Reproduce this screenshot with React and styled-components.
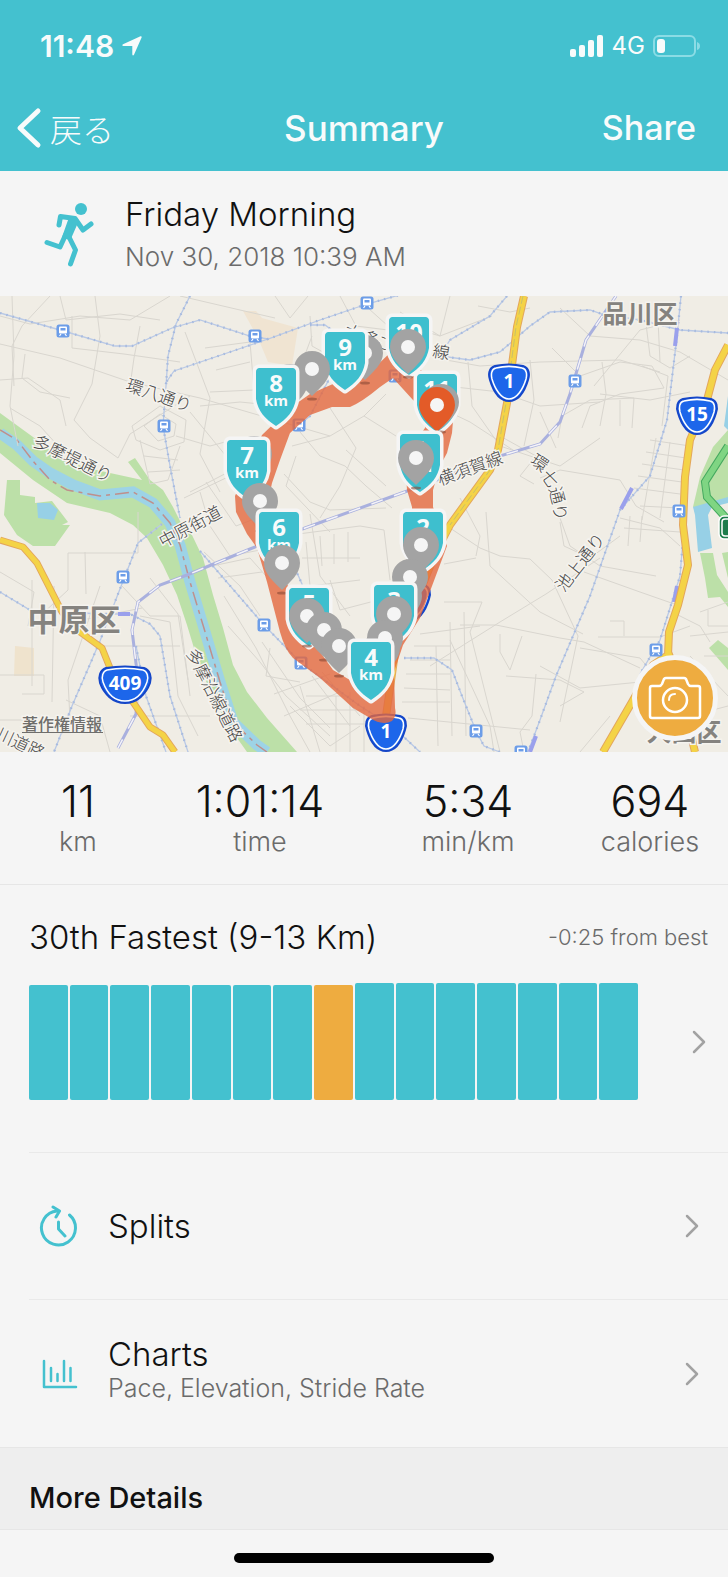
import React from 'react'
import styled, { createGlobalStyle } from 'styled-components';

const teal = '#44c1cf';
const amber = '#eeac40';

const GlobalStyle = createGlobalStyle`
  * {
    box-sizing: border-box;
  }
  body {
    margin: 0;
    background: #f5f5f5;
    color: #111;
    font-family: Inter, "Noto Sans CJK JP", sans-serif;
  }
  h1, h2, h3, p, dl, dd, dt {
    margin: 0;
    font-weight: 300;
  }
`;

const Header = styled.header`
  background: ${teal};
  color: #f8fbfb;
`;

const StatusBar = styled.div`
  display: flex;
  justify-content: space-between;
  align-items: center;
  height: 88px;
  padding: 3px 28px 0 40px;
`;

const StatusGroup = styled.div`
  display: flex;
  align-items: center;
  gap: 8px;
`;

const Clock = styled.span`
  font-size: 30px;
  font-weight: 600;
`;

const Network = styled.span`
  font-size: 24px;
`;

const Nav = styled.nav`
  display: grid;
  grid-template-columns: 1fr auto 1fr;
  align-items: center;
  height: 83px;
  padding: 0 16px 4px;
`;

const NavButton = styled.button`
  display: flex;
  align-items: center;
  gap: 8px;
  justify-self: ${props => props.$end ? 'end' : 'start'};
  padding: ${props => props.$end ? '0 16px' : '0'};
  border: none;
  background: none;
  color: inherit;
  font-family: inherit;
  font-size: ${props => props.$end ? '34px' : '32px'};
  font-weight: ${props => props.$end ? 500 : 300};
  cursor: pointer;
`;

const NavTitle = styled.h1`
  font-size: 35px;
  font-weight: 500;
`;

const Activity = styled.section`
  display: flex;
  align-items: center;
  gap: 30px;
  height: 125px;
  padding: 0 43px;
`;

const ActivityTitle = styled.h2`
  font-size: 33px;
  line-height: 46px;
`;

const SubText = styled.p`
  color: #6b6b6b;
  font-size: ${props => props.$small ? '25px' : '26px'};
  line-height: ${props => props.$small ? '28px' : '40px'};
`;

const MapPanel = styled.section`
  position: relative;
  overflow: hidden;
`;

const MapSvg = styled.svg`
  display: block;
  width: 100%;
  background: #f0ede5;
`;

const CameraButton = styled.button`
  position: absolute;
  right: 10px;
  bottom: 11px;
  display: flex;
  align-items: center;
  justify-content: center;
  width: 86px;
  height: 86px;
  padding: 0;
  border: 5px solid #f5f5f5;
  border-radius: 50%;
  background: ${amber};
  cursor: pointer;
`;

const Stats = styled.dl`
  display: grid;
  grid-template-columns: 3fr 4fr 4fr 3fr;
  align-items: center;
  height: 133px;
  padding-top: 2px;
  border-bottom: 1px solid #e6e6e6;
`;

const Stat = styled.div`
  display: flex;
  flex-direction: column-reverse;
  align-items: center;
`;

const StatValue = styled.dd`
  font-size: 43px;
  line-height: 46px;
`;

const StatLabel = styled.dt`
  color: #6b6b6b;
  font-size: 27px;
  line-height: 36px;
`;

const Ranking = styled.section`
  margin-left: 29px;
  padding: 30px 0 52px;
  border-bottom: 1px solid #e9e9e9;
`;

const RankingHead = styled.div`
  display: flex;
  align-items: center;
  justify-content: space-between;
  height: 44px;
  padding-right: 20px;
`;

const RankingTitle = styled.h3`
  font-size: 33px;
`;

const FromBest = styled.span`
  color: #6b6b6b;
  font-size: 22px;
  font-weight: 300;
`;

const RankingLink = styled.a`
  display: flex;
  align-items: center;
  justify-content: space-between;
  margin-top: 24px;
  padding-right: 22px;
`;

const Bars = styled.div`
  display: flex;
  align-items: flex-end;
  gap: 2px;
  flex: 1;
  height: 117px;
  margin-right: 54px;
`;

const Bar = styled.div`
  flex: 1;
  height: ${props => props.$tall ? '117px' : '115px'};
  border-radius: 2px;
  background: ${props => props.$current ? amber : teal};
`;

const Row = styled.a`
  display: flex;
  align-items: center;
  height: 147px;
  margin-left: 29px;
  padding: 0 29px 0 9px;
  border-bottom: ${props => props.$last ? 'none' : '1px solid #e9e9e9'};
  color: inherit;
  text-decoration: none;
`;

const RowIcon = styled.span`
  display: flex;
  width: 70px;
`;

const RowText = styled.div`
  flex: 1;
  padding-bottom: ${props => props.$raised ? '12px' : '0'};
`;

const RowTitle = styled.h3`
  font-size: 33px;
  line-height: 40px;
`;

const MoreDetails = styled.h3`
  padding: 33px 29px 14px;
  border-top: 1px solid #e6e6e6;
  border-bottom: 1px solid #e6e6e6;
  background: #eee;
  font-size: 29px;
  font-weight: 500;
  line-height: 34px;
`;

const Footer = styled.footer`
  display: flex;
  justify-content: center;
  padding: 23px 0 16px;
`;

const HomeBar = styled.div`
  width: 260px;
  height: 10px;
  border-radius: 5px;
  background: #000;
`;

const MapLabel = styled.text`
  fill: ${props => props.$area ? '#85837f' : '#444'};
  stroke: #f5f3ee;
  stroke-width: 3px;
  paint-order: stroke;
  font-family: "Noto Sans CJK JP", sans-serif;
  font-size: ${props => props.$size || 17}px;
  font-weight: ${props => props.$area ? 700 : 300};
  text-anchor: middle;
`;

const LegalLabel = styled(MapLabel)`
  fill: #6f6e6b;
  font-weight: 500;
`;

const PinText = styled.text`
  fill: #f8fbfb;
  font-family: "Open Sans", "Noto Sans", sans-serif;
  font-size: ${props => props.$unit ? '15px' : '24px'};
  font-weight: 700;
  text-anchor: middle;
`;

const ShieldText = styled.text`
  fill: #fff;
  font-family: "Noto Sans", sans-serif;
  font-size: 19px;
  font-weight: 700;
  text-anchor: middle;
`;

const streets = [
  'M0 48L60 62L130 86L200 102L330 140', 'M12 0L14 60L10 110L18 150', 'M50 0L22 30L12 50L14 90', 'M0 20L30 28L80 20L130 24L170 0',
  'M60 0L66 24L120 18L160 24', 'M72 20V52L124 58L180 66', 'M95 0L100 40L92 88L74 124L90 142L118 162L130 138L190 100',
  'M140 30L134 62L130 90', 'M25 58L22 82L40 96L70 102', 'M0 84L28 82L60 104L66 130', 'M10 112L40 130L60 152',
  'M185 36L210 102L200 158L220 196', 'M180 0L240 14L275 22', 'M205 52L250 46L254 94L210 96', 'M216 74L250 66',
  'M200 110L240 106L280 110', 'M190 116L226 160L268 208', 'M176 140L210 150L240 142', 'M132 130L160 110L186 124L184 146L160 154L136 144Z',
  'M144 130L160 118L176 128L174 140L158 145Z', 'M140 144L150 188L168 184L180 150', 'M144 160L178 164', 'M148 176L180 174', 'M184 202L230 180L262 170',
  'M200 196L210 230L230 260L280 250', 'M190 196L240 170L248 200', 'M228 176L260 240', 'M206 186L236 230L262 220',
  'M275 0L290 22L308 0', 'M310 20L312 50L330 60', 'M312 40L300 72', 'M340 0L356 30L388 34', 'M368 12L388 30',
  'M300 136L320 160L345 170L366 190L392 212', 'M292 150L330 140L364 120L386 98', 'M330 112L356 152L340 190L320 222',
  'M284 178L310 206L330 214L386 212', 'M296 160L286 190L330 236', 'M346 154L386 190', 'M364 120L396 140', 'M310 218L320 280L350 320',
  'M298 238L360 230L384 234L390 284', 'M306 246L310 290L360 284', 'M320 240L322 270M334 238V268M348 236V266', 'M302 262H360', 'M330 284L340 314L386 302',
  'M0 276L34 296L28 330', 'M68 257H138V216', 'M85 256L86 298', 'M68 257V294L40 320', 'M32 284V390M54 290L52 406', 'M0 379H44V398H22', 'M0 424H70L68 384L100 290',
  'M122 290L150 320H180L190 400', 'M140 320L170 326L178 400L198 440', 'M150 282L178 318L188 384', 'M100 350H180', 'M130 420H210', 'M82 324L142 312',
  'M66 404L100 420L110 456', 'M204 256L240 290L260 320', 'M212 270L250 262L266 280', 'M218 282L262 276', 'M224 300L256 352L290 420L310 456',
  'M228 330L260 366L286 400L330 440', 'M262 346L300 402L330 432', 'M270 352L266 380L300 386', 'M274 398L330 378', 'M284 420L340 396', 'M300 390L320 456',
  'M312 380L350 430M322 376L360 420', 'M290 410L330 450L360 430', 'M306 400L350 400M300 414H366M306 428H370', 'M336 400V456M350 396V456M364 410V456',
  'M450 0L440 40L420 34', 'M400 16L440 40L492 20', 'M478 10L510 16L530 12', 'M446 64L480 70L540 66L620 64L660 76', 'M446 90L500 96L540 110L600 106',
  'M468 66L472 110L500 150L560 170L600 142', 'M424 104L470 126L516 156', 'M456 76V104', 'M530 64L534 104L524 150', 'M560 12L590 40L640 44L680 56L728 84',
  'M552 52L580 80L620 66L652 70L664 92L620 98L590 110L582 132', 'M602 66L606 98L600 130', 'M600 98L650 104L690 96', 'M646 28L650 60L670 72L690 60', 'M658 24L660 66',
  'M594 90L640 34L680 24', 'M558 142L562 120L590 104L634 102L632 132', 'M642 70L668 80L662 130', 'M540 116L556 152', 'M620 104V130',
  'M650 144L690 150', 'M646 156L686 162', 'M642 168L684 174', 'M638 180L682 186', 'M634 192L680 198', 'M656 142L642 224M670 146L660 222', 'M640 210L680 212',
  'M500 140L536 160L520 180L534 188', 'M540 182L560 174L620 184L636 210L664 226', 'M560 222L570 250L600 270L656 280', 'M560 226L564 250L590 262L620 240',
  'M450 232L480 252L500 260L530 263L552 284L578 340L560 426', 'M460 202L480 240L476 260', 'M444 268L476 262', 'M486 216L490 270L540 316L583 338',
  'M430 370L500 326L546 298L600 262', 'M460 329H496L560 342L584 346L640 372', 'M444 306H482L470 336L500 456', 'M420 338L480 330', 'M500 338V356L510 374L522 340',
  'M450 326L452 440M464 316L466 440M436 350L438 450', 'M414 350H450M410 364H450M406 378H450', 'M404 392L450 394M402 406H450M408 422L530 434', 'M450 344L490 430L494 456',
  'M536 378L532 420L520 436L524 456', 'M506 380L560 384L584 396L560 410', 'M540 370L580 392L640 386', 'M580 352L640 362L660 386', 'M598 341H660L690 330', 'M610 325H624V340',
  'M584 276L640 296L680 310', 'M620 222L660 232L680 250', 'M624 232L680 236', 'M630 220L628 250M642 220L640 246', 'M700 316L728 306M708 314V330H728M690 340L728 336', 'M676 318L700 330L710 346',
  'M690 360L728 400M700 380L690 420L728 410M704 360L728 360', 'M640 410L660 440L690 436', 'M610 420L580 456',
];

const railways = [
  'M0 17L60 34L115 50H132L172 32L200 24L250 40L268 43L320 24L367 8L410 -4',
  'M190 0L176 28L168 60L166 90L163 130L170 170L180 222', 'M268 43L230 56L174 75L165 88',
  'M310 29H325L340 40', 'M507 0L490 20L450 44L440 60L470 64L500 56L530 30L550 16L590 14L602 18L640 24L680 34L728 37',
  'M681 0L677 40L667 124L650 180L620 214L590 300L556 380L540 424L528 456',
  'M340 62L310 120L299 129', 'M200 255L264 329L301 367L360 410L392 430L420 456', 'M162 228L138 247L118 298L100 345L72 410L54 456',
  'M0 296L30 314L100 318H130L150 328L160 340L170 400L188 456', 'M136 350L146 400L166 456',
  'M404 362H434L452 374L462 400L476 435L484 450L500 456', 'M685 219L680 280L660 344L640 378', 'M284 248L302 288L304 310',
];

const jrLines = [
  'M616 0L586 44L570 98L560 126L540 148L500 160L410 194L305 232L250 253L187 279L160 289L138 306L132 334L138 384L136 418L118 452',
];

const stations = [[63, 35], [255, 40], [367, 7], [164, 130], [299, 129], [395, 80], [575, 85], [679, 215], [123, 281], [264, 329], [301, 367], [476, 435], [656, 354], [521, 456]];

// kept in drawing order: lower markers overlap the ones above
const markers = [
  { x: 365, y: 57 },
  { x: 409, y: 21, km: 10 },
  { x: 408, y: 51 },
  { x: 345, y: 36, km: 9 },
  { x: 290, y: 86 },
  { x: 312, y: 73 },
  { x: 276, y: 72, km: 8 },
  { x: 437, y: 78, km: 11 },
  { x: 441, y: 106 },
  { x: 437, y: 109, end: true },
  { x: 420, y: 138, km: 1 },
  { x: 416, y: 162 },
  { x: 254, y: 158 },
  { x: 247, y: 144, km: 7 },
  { x: 260, y: 205 },
  { x: 423, y: 216, km: 2 },
  { x: 279, y: 216, km: 6 },
  { x: 421, y: 249 },
  { x: 282, y: 267 },
  { x: 404, y: 300 },
  { x: 410, y: 281 },
  { x: 394, y: 289, km: 3 },
  { x: 309, y: 292, km: 5 },
  { x: 394, y: 318 },
  { x: 307, y: 320 },
  { x: 324, y: 334 },
  { x: 382, y: 352 },
  { x: 385, y: 342 },
  { x: 339, y: 350 },
  { x: 371, y: 346, km: 4 },
];

const stats = [
  { value: '11', label: 'km' },
  { value: '1:01:14', label: 'time' },
  { value: '5:34', label: 'min/km' },
  { value: '694', label: 'calories' },
];

const Station = ({ x, y }) => (
  <g transform={`translate(${x} ${y})`}>
    <rect x="-6.5" y="-6.5" width="13" height="13" rx="2.5" fill="#6c9de8" />
    <path d="M-3 -4.5H3A1 1 0 0 1 4 -3.5V1.5A1 1 0 0 1 3 2.5H-3A1 1 0 0 1 -4 1.5V-3.5A1 1 0 0 1 -3 -4.5Z" fill="#fff" />
    <path d="M-2.5 -3H2.5V-.5H-2.5Z" fill="#6c9de8" />
    <path d="M-2 3L-3.5 5M2 3L3.5 5" stroke="#fff" strokeWidth="1.2" />
  </g>
);

const Shield = ({ x, y, number, wide }) => (
  <g transform={`translate(${x} ${y})`}>
    {wide
      ? <path d="M-19 -17C-7 -19 7 -19 19 -17C25 -15 27 -8 25 -2C21 9 12 18 0 18C-12 18 -21 9 -25 -2C-27 -8 -25 -15 -19 -17Z" fill="#1d66ea" stroke="#1546c8" strokeWidth="2" />
      : <path d="M-14 -17C-5 -19 5 -19 14 -17C20 -15 21 -9 19 -3C16 7 10 18 0 18C-10 18 -16 7 -19 -3C-21 -9 -20 -15 -14 -17Z" fill="#1d66ea" stroke="#1546c8" strokeWidth="2" />}
    {wide
      ? <path d="M-18 -15C-7 -17 7 -17 18 -15C22 -14 24 -8 22 -3C18 8 11 16 0 16C-11 16 -18 8 -22 -3C-24 -8 -22 -14 -18 -15Z" fill="none" stroke="#fff" strokeWidth="1.5" />
      : <path d="M-13 -15C-5 -17 5 -17 13 -15C18 -14 18 -8 17 -4C14 6 8 16 0 16C-8 16 -14 6 -17 -4C-18 -8 -18 -14 -13 -15Z" fill="none" stroke="#fff" strokeWidth="1.5" />}
    <ShieldText y="5">{number}</ShieldText>
  </g>
);

const KmPin = ({ x, y, km }) => (
  <g transform={`translate(${x} ${y})`}>
    <path d="M-17 0H17A4 4 0 0 1 20 4V31C18 43 11 51 0 58C-11 51 -18 43 -20 31V4A4 4 0 0 1 -17 0Z" fill="#3ebfce" stroke="#f5f5f5" strokeWidth="7" paintOrder="stroke" strokeLinejoin="round" />
    <PinText y="24">{km}</PinText>
    <PinText y="38" $unit>km</PinText>
  </g>
);

const DotPin = ({ x, y, end }) => (
  <g transform={`translate(${x} ${y})`}>
    <ellipse cy="30" rx="5" ry="1.5" fill="#8a4a35" opacity=".6" />
    <path d="M-18 0A18 18 0 0 1 18 0C18 11 8 19 0 27C-8 19 -18 11 -18 0Z" fill={end ? '#e35b28' : '#a3a3a3'} />
    <circle r="7" fill="#f5f5f5" />
  </g>
);

const RouteMap = () => (
  <MapSvg viewBox="0 0 728 456" role="img" aria-label="Route map">
    <path d="M243 15L256 15L262 22L298 32L292 70L268 66L258 42Z" fill="#f0e4d2" />
    <path d="M15 350L34 352V380H14Z" fill="#efe3cd" />
    <g fill="#bce0a8">
      <path d="M0 117L33 141L50 154L83 171L110 177L133 182L142 184L128 166L135 162L150 184L163 194L173 211L182 229L192 239L203 262L213 299L223 332L233 369L247 396L267 422L297 456H247L230 432L217 409L200 372L187 329L177 299L163 269L147 242L133 229L110 217L67 207L33 184L0 157Z" />
      <path d="M7 184H20V199L35 201V207L52 205L68 226L62 229L70 229L55 250H33L17 239L4 219Z" />
      <path d="M728 134L713 151L700 181L693 211L707 211L728 202Z" />
      <path d="M700 257H713L717 279L728 296V311L720 301L708 302L705 282Z" />
      <path d="M722 257L728 256V282Z" />
      <path d="M718 344L728 352V374L709 352Z" />
    </g>
    <g fill="#97d0e6">
      <path d="M693 211L695 219L698 256L712 252L708 219L712 211L728 207V201Z" />
      <path d="M728 100L724 130L728 134Z" />
      <path d="M37 207H50L58 214L54 224L38 222Z" />
    </g>
    <path d="M0 137L17 149L33 165L50 177L73 189L100 199L133 196L153 207L170 227L180 249L190 286L203 329L220 386L233 426L257 449L267 456" fill="none" stroke="#9dd3e6" strokeWidth="11" />
    <path d="M0 134L17 144L33 165L50 184L67 194L100 200L133 196L153 207L170 227L180 249L190 286L203 329L220 386L233 426L257 449L267 456" fill="none" stroke="#bf8f8c" strokeWidth="1.5" strokeDasharray="14 5 4 5" />
    <g fill="none" stroke="#d9d6cf" strokeWidth="1">
      {streets.map(d => <path key={d} d={d} />)}
    </g>
    <g fill="none" stroke="#b9c9e6" strokeWidth="1.3">
      {railways.map(d => <path key={d} d={d} />)}
    </g>
    <g fill="none" stroke="#a7bade" strokeWidth="2.3" strokeDasharray="1.5 5">
      {railways.map(d => <path key={d} d={d} />)}
    </g>
    {jrLines.map(d => (
      <g key={d} fill="none">
        <path d={d} stroke="#a9b0de" strokeWidth="3" />
        <path d={d} stroke="#f4f3f8" strokeWidth="1.5" strokeDasharray="12 12" />
      </g>
    ))}
    <path d="M677 32L675 50M632 192L621 213M677 290L674 306M536 440L530 456M118 318H130" stroke="#9aa0ec" strokeWidth="4" />
    {[['#e3a65c', 7], ['#f4d347', 5]].map(([color, width]) => (
      <g key={color} fill="none" stroke={color} strokeWidth={width} strokeLinejoin="round">
        <path d="M0 244L23 251L37 267L62 316L80 336L102 352L110 372L133 406L150 431L163 439L175 456" />
        <path strokeWidth={width + 1} d="M524 0L517 31L507 107L498 154L490 174L450 229L436 256L418 300L396 350L386 420" />
        <path strokeWidth={width + 1} d="M728 49L715 74L707 104L690 144L685 181L683 229L688 269L678 309L669 336L668 359L653 369L632 406L603 456M668 356L676 376L695 456" />
      </g>
    ))}
    <path d="M523 0L516 31L506 107L498 154L490 174L450 229" fill="none" stroke="#c9c06a" strokeWidth="1" strokeDasharray="8 3" />
    <path d="M728 150L705 186L707 201L728 224" fill="none" stroke="#45a95f" strokeWidth="8" />
    <path d="M728 150L705 186L707 201L728 224" fill="none" stroke="#7fd583" strokeWidth="6" />
    <rect x="719" y="220" width="26" height="23" rx="5" fill="#1c7c4b" stroke="#fff" strokeWidth="1.5" />
    <rect x="722" y="223" width="20" height="17" rx="3" fill="none" stroke="#fff" strokeWidth="1.5" />
    {stations.map(([x, y]) => <Station key={x} x={x} y={y} />)}

    <MapLabel transform="translate(157 105) rotate(19)">環八通り</MapLabel>
    <MapLabel transform="translate(70 168) rotate(26)">多摩堤通り</MapLabel>
    <MapLabel transform="translate(193 236) rotate(-28)">中原街道</MapLabel>
    <MapLabel transform="translate(472 178) rotate(-20)">横須賀線</MapLabel>
    <MapLabel transform="translate(350 42) rotate(25)">大</MapLabel>
    <MapLabel transform="translate(368 48) rotate(25)">多</MapLabel>
    <MapLabel transform="translate(382 53) rotate(20)">こ</MapLabel>
    <MapLabel transform="translate(440 62) rotate(10)">線</MapLabel>
    <MapLabel transform="translate(536 172) rotate(35)">環</MapLabel>
    <MapLabel transform="translate(545 186) rotate(55)">七</MapLabel>
    <MapLabel transform="translate(551 201) rotate(75)">通</MapLabel>
    <MapLabel transform="translate(554 217) rotate(82)">り</MapLabel>
    <MapLabel transform="translate(585 270) rotate(-52)">池上通り</MapLabel>
    <MapLabel transform="translate(209 402) rotate(63)">多摩沿線道路</MapLabel>
    <MapLabel transform="translate(18 453) rotate(25)">川道路</MapLabel>
    <MapLabel $area $size={25} transform="translate(640 27)">品川区</MapLabel>
    <MapLabel $area $size={31} transform="translate(74 335)">中原区</MapLabel>
    <MapLabel $area $size={25} transform="translate(684 445)">大田区</MapLabel>
    <a href="#legal">
      <LegalLabel $size={16} transform="translate(62 434)">著作権情報</LegalLabel>
      <path d="M22 436.5H103" stroke="#6f6e6b" strokeWidth="1" />
    </a>

    <Shield x={509} y={87} number="1" />
    <Shield x={697} y={120} number="15" />
    <Shield x={125} y={389} number="409" wide />
    <Shield x={410} y={306} number="1" />
    <Shield x={386} y={437} number="1" />

    <path fillRule="evenodd" fill="#e4683f" opacity=".8" d="M393 54L367 79L333 88L310 98L290 112L262 139L244 180L235 200L236 216L247 238L257 252L267 286L280 336Q285 354 293 362L320 382L353 412L370 422Q382 430 392 425Q397 420 395 412L394 376L403 349L420 322L435 282L447 250L433 211L433 194L440 170L447 157L452 137L455 100L425 78L404 57ZM393 82L380 91Q362 106 350 111H332L310 119L290 137L280 164L272 187L266 215L274 250L290 296L313 346L333 374L360 390L372 370L388 330L402 280L412 240V211L407 194L405 160L425 132L427 116L413 104Z" />
    {markers.map(m => m.km
      ? <KmPin key={'km' + m.km} {...m} />
      : <DotPin key={m.x + '-' + m.y} {...m} />)}
  </MapSvg>
);

const Chevron = () => (
  <svg width="14" height="24" viewBox="0 0 14 24" fill="none" stroke="#a2a2a2" strokeWidth="2.5" strokeLinecap="round" strokeLinejoin="round" aria-hidden="true">
    <path d="M2 2L12 12L2 22" />
  </svg>
);

const App = () => {
  return (
    <>
      <GlobalStyle />
      <Header>
        <StatusBar>
          <StatusGroup>
            <Clock>11:48</Clock>
            <svg width="20" height="20" viewBox="0 0 20 20" fill="#f8fbfb" aria-hidden="true">
              <path d="M18.5 .3Q20 0 19.6 1.5L12 18.8Q10.8 20.5 10.3 18.5V10H1.5Q-.6 9.5 1 8.3Z" />
            </svg>
          </StatusGroup>
          <StatusGroup>
            <svg width="34" height="22" viewBox="0 0 34 22" fill="#f8fbfb" aria-hidden="true">
              <rect x="0" y="14" width="6" height="8" rx="2" />
              <rect x="9" y="10" width="6" height="12" rx="2" />
              <rect x="18" y="5" width="6" height="17" rx="2" />
              <rect x="27" y="0" width="6" height="22" rx="2" />
            </svg>
            <Network>4G</Network>
            <svg width="47" height="22" viewBox="0 0 47 22" fill="none" aria-hidden="true">
              <rect x="1" y="1" width="41" height="20" rx="5" stroke="#8bdce5" strokeWidth="2" />
              <rect x="4" y="4" width="8" height="14" rx="3" fill="#f8fbfb" />
              <path d="M44 7Q47 8 47 11T44 15Z" fill="#8bdce5" />
            </svg>
          </StatusGroup>
        </StatusBar>
        <Nav>
          <NavButton>
            <svg width="26" height="42" viewBox="0 0 26 42" fill="none" stroke="#f8fbfb" strokeWidth="5" strokeLinecap="round" strokeLinejoin="round" aria-hidden="true">
              <path d="M22 4L4 21L22 38" />
            </svg>
            戻る
          </NavButton>
          <NavTitle>Summary</NavTitle>
          <NavButton $end>Share</NavButton>
        </Nav>
      </Header>
      <Activity>
        <svg width="52" height="66" viewBox="0 0 52 66" fill="none" stroke={teal} strokeWidth="6" strokeLinecap="round" strokeLinejoin="round" aria-hidden="true">
          <circle cx="38" cy="8" r="6" fill={teal} stroke="none" />
          <path strokeWidth="5" d="M16 24L17.5 15.5L32 17.5L40 29L48 23" />
          <path strokeWidth="5" d="M23 33L17 46L4 41.5M25 34L32.5 49L27.5 63" />
          <path strokeWidth="5" d="M28 18L33 20L26 36L22 35Z" fill={teal} />
        </svg>
        <div>
          <ActivityTitle>Friday Morning</ActivityTitle>
          <SubText>Nov 30, 2018 10:39 AM</SubText>
        </div>
      </Activity>
      <MapPanel>
        <RouteMap />
        <CameraButton aria-label="Add photo">
          <svg width="54" height="44" viewBox="0 0 54 44" fill="none" stroke="#fff" strokeWidth="2.5" strokeLinejoin="round" strokeLinecap="round" aria-hidden="true">
            <path d="M4 10H11Q13 10 14 8L16 3Q17 2 18 2H36Q37 2 38 3L40 8Q41 10 43 10H50Q52 10 52 12V40Q52 42 50 42H4Q2 42 2 40V12Q2 10 4 10Z" />
            <circle cx="27" cy="24" r="12" />
            <path d="M21 24Q21 18 27 18" strokeWidth="2" />
          </svg>
        </CameraButton>
      </MapPanel>
      <Stats>
        {stats.map(s => (
          <Stat key={s.label}>
            <StatLabel>{s.label}</StatLabel>
            <StatValue>{s.value}</StatValue>
          </Stat>
        ))}
      </Stats>
      <Ranking>
        <RankingHead>
          <RankingTitle>30th Fastest (9-13 Km)</RankingTitle>
          <FromBest>-0:25 from best</FromBest>
        </RankingHead>
        <RankingLink href="#ranking" aria-label="Ranking">
          <Bars>
            {Array.from({ length: 15 }, (_, i) => (
              <Bar key={i} $current={i === 7} $tall={i > 7} />
            ))}
          </Bars>
          <Chevron />
        </RankingLink>
      </Ranking>
      <Row href="#splits">
        <RowIcon>
          <svg width="40" height="42" viewBox="0 0 40 42" fill="none" stroke={teal} strokeWidth="3" strokeLinecap="round" strokeLinejoin="round" aria-hidden="true">
            <path d="M31.5 10A17 17 0 1 1 19 6" />
            <path d="M15 2L21.5 6L18 12M20.5 17V24L27 31" />
          </svg>
        </RowIcon>
        <RowText>
          <RowTitle>Splits</RowTitle>
        </RowText>
        <Chevron />
      </Row>
      <Row href="#charts" $last>
        <RowIcon>
          <svg width="40" height="30" viewBox="0 0 40 30" fill="none" stroke={teal} strokeWidth="2.5" strokeLinecap="round" strokeLinejoin="round" aria-hidden="true">
            <path d="M6 2V28H38M13 9V22M19.5 15V22M26 2V22M32.5 9V22" />
          </svg>
        </RowIcon>
        <RowText $raised>
          <RowTitle>Charts</RowTitle>
          <SubText $small>Pace, Elevation, Stride Rate</SubText>
        </RowText>
        <Chevron />
      </Row>
      <MoreDetails>More Details</MoreDetails>
      <Footer>
        <HomeBar />
      </Footer>
    </>
  );
};

export default App;
